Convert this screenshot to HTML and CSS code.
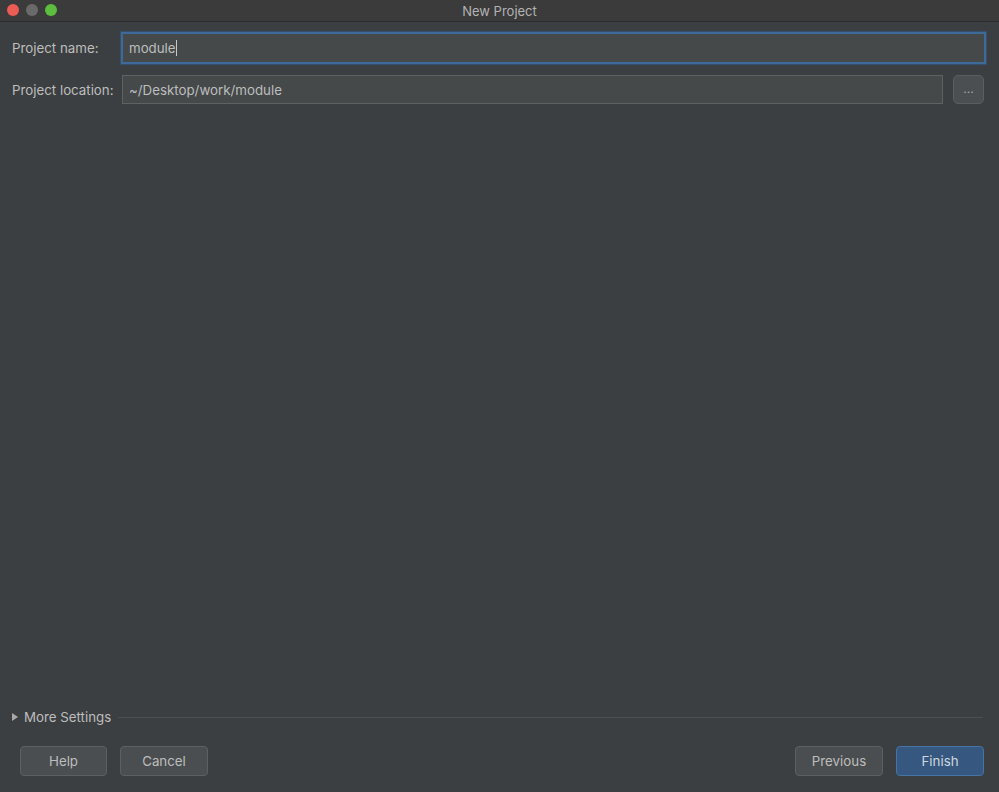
FILE: index.html
```html
<!DOCTYPE html>
<html lang="en">
<head>
  <meta charset="UTF-8">
  <title>New Project</title>
  <link rel="stylesheet" href="styles.css">
</head>
<body>
  <div class="window">
    <div class="titlebar">
      <div class="lights">
        <span class="light red"></span>
        <span class="light gray"></span>
        <span class="light green"></span>
      </div>
      <div class="title">New Project</div>
    </div>
    <div class="content">
      <div class="form">
        <div class="row">
          <label class="label" for="name">Project name:</label>
          <div class="field focused">
            <span class="value">module</span><span class="caret"></span>
          </div>
        </div>
        <div class="row">
          <label class="label" for="loc">Project location:</label>
          <div class="field">
            <span class="value">~/Desktop/work/module</span>
          </div>
          <button class="browse">...</button>
        </div>
      </div>
      <div class="more">
        <span class="arrow"></span>
        <span class="more-text">More Settings</span>
        <span class="rule"></span>
      </div>
      <div class="buttons">
        <button class="btn">Help</button>
        <button class="btn">Cancel</button>
        <span class="spacer"></span>
        <button class="btn">Previous</button>
        <button class="btn primary">Finish</button>
      </div>
    </div>
  </div>
</body>
</html>
```
FILE: styles.css
```css
html, body {
  margin: 0;
  padding: 0;
  height: 100%;
  background: #3c3f41;
}
body {
  font-family: Inter, "Liberation Sans", sans-serif;
  font-size: 13.3px;
  color: #bbbbbb;
}
.window {
  display: flex;
  flex-direction: column;
  height: 792px;
  background: #3c3f41;
}
.titlebar {
  position: relative;
  height: 21px;
  background: #3b3b3b;
  border-bottom: 1px solid #2b2b2b;
  display: flex;
  align-items: center;
  justify-content: center;
}
.lights {
  position: absolute;
  left: 7px;
  top: 4px;
  display: flex;
  gap: 7px;
}
.light {
  width: 12px;
  height: 12px;
  border-radius: 50%;
}
.light.red { background: #ed5b55; }
.light.gray { background: #6a6a6a; }
.light.green { background: #5dbd3f; }
.title {
  color: #b3b3b3;
  font-size: 13px;
}
.content {
  flex: 1;
  display: flex;
  flex-direction: column;
  padding: 10px 15px 16px 12px;
}
.form {
  flex: 1;
  display: flex;
  flex-direction: column;
  gap: 11px;
}
.row {
  display: flex;
  align-items: center;
}
.label {
  width: 109px;
  flex: none;
  color: #bdbdbd;
}
.field {
  flex: 1;
  height: 29px;
  box-sizing: border-box;
  background: #45494a;
  border: 1px solid #5f6263;
  display: flex;
  align-items: center;
  padding: 0 6px;
  color: #bdbdbd;
  margin-left: 1px;
}
.field.focused {
  height: 32px;
  border: 2px solid #3e6a99;
  box-shadow: 0 0 0 1px #35506e;
  margin-left: 0;
  margin-right: -2px;
}
.caret {
  width: 1px;
  height: 16px;
  background: #c8c8c8;
}
.browse {
  margin-left: 10px;
  width: 31px;
  height: 29px;
  background: #4b4f51;
  border: 1px solid #5b5e60;
  border-radius: 5px;
  color: #aaaaaa;
  font-family: inherit;
  font-size: 12px;
  padding: 0 0 2px;
}
.more {
  display: flex;
  align-items: center;
  height: 16px;
  margin-bottom: 21px;
}
.arrow {
  width: 0;
  height: 0;
  border-top: 4px solid transparent;
  border-bottom: 4px solid transparent;
  border-left: 6px solid #a9a9a9;
  margin-right: 6px;
}
.more-text {
  color: #bdbdbd;
}
.rule {
  flex: 1;
  height: 1px;
  background: #4d5052;
  margin-left: 7px;
  margin-right: 1px;
}
.buttons {
  display: flex;
  align-items: center;
  gap: 13px;
  padding-left: 8px;
}
.spacer {
  flex: 1;
}
.btn {
  width: 88px;
  height: 30px;
  background: #4b4e50;
  border: 1px solid #5d6062;
  border-radius: 4px;
  color: #bdbdbd;
  font-family: inherit;
  font-size: 13.3px;
}
.btn:first-child {
  width: 87px;
}
.btn.primary {
  background: #365880;
  border-color: #4574a6;
  color: #cfd6df;
}
```
